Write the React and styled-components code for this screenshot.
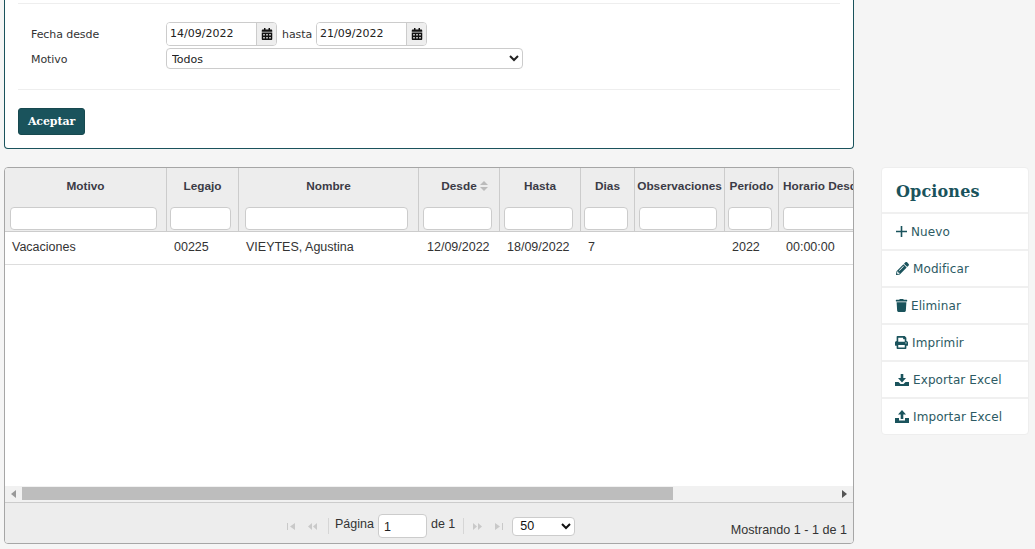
import { createGlobalStyle, styled } from "styled-components";
import { FaCalendarAlt, FaPencilAlt, FaPrint, FaTrash } from "react-icons/fa";

const teal = "#1a535c";

const GlobalStyle = createGlobalStyle`
  html, body {
    margin: 0;
    background: #f5f5f5;
    overflow: hidden;
  }
  * { box-sizing: border-box; }
`;

const Page = styled.div`
  width: 1035px;
  height: 549px;
  padding-left: 4px;
  display: grid;
  grid-template-columns: 850px 148px;
  column-gap: 27px;
  align-items: start;
  font-family: "DejaVu Sans", sans-serif;
`;

const Main = styled.div`
  display: flex;
  flex-direction: column;
  gap: 18px;
`;

const FilterPanel = styled.section`
  height: 149px;
  background: #fff;
  border: 1px solid ${teal};
  border-top: 0;
  border-radius: 0 0 4px 4px;
  padding: 3px 13px 0;
`;

const Rule = styled.div`
  height: 1px;
  background: #eee;
`;

const FilterForm = styled.div`
  height: 85px;
  padding: 18px 0 0 13px;
  display: flex;
  flex-direction: column;
  gap: 2px;
`;

const FormRow = styled.div`
  display: flex;
  align-items: center;
`;

const Label = styled.label`
  width: 135px;
  padding-top: ${(p) => p.$drop || 0}px;
  font-size: 11px;
  letter-spacing: -0.08px;
  color: #333;
`;

const DateGroup = styled.div`
  display: flex;
  width: 111px;
  height: 24px;
  border: 1px solid #ccc;
  border-radius: 4px;
  overflow: hidden;
`;

const DateValue = styled.div`
  flex: 1;
  background: #fff;
  font-size: 11px;
  line-height: 22px;
  padding-left: 3px;
  color: #222;
`;

const CalendarAddon = styled.div`
  width: 20px;
  background: #eee;
  border-left: 1px solid #ccc;
  display: flex;
  align-items: center;
  justify-content: center;
  color: #111;
  font-size: 12px;
`;

const Between = styled.span`
  width: 39px;
  padding-left: 5px;
  font-size: 11px;
  letter-spacing: -0.08px;
  color: #333;
`;

const MotivoSelect = styled.select`
  width: 357px;
  height: 21px;
  margin: 0;
  padding: 2px 0 0 1px;
  border: 1px solid #ccc;
  border-radius: 4px;
  background-color: #fff;
  font-family: "DejaVu Sans", sans-serif;
  font-size: 11px;
  color: #222;
`;

const AcceptButton = styled.button`
  display: block;
  width: 67px;
  height: 27px;
  margin-top: 18px;
  padding: 0;
  background: ${teal};
  border: 1px solid #17494f;
  border-radius: 3px;
  color: #fff;
  font-family: "DejaVu Serif", serif;
  font-size: 11px;
  font-weight: 700;
  letter-spacing: -0.1px;
`;

const Grid = styled.section`
  height: 377px;
  background: #fff;
  border: 1px solid #a6a6a6;
  border-radius: 4px;
  display: flex;
  flex-direction: column;
  overflow: hidden;
  font-family: "Liberation Sans", sans-serif;
  font-size: 12.5px;
  color: #333;
`;

const columns = "162px 72px 180px 81px 81px 54px 90px 54px 90px";

const HeaderRow = styled.div`
  display: grid;
  grid-template-columns: ${columns};
  height: 64px;
  background: #ededed;
  border-bottom: 1px solid #ccc;
  overflow: hidden;
`;

const HeaderCell = styled.div`
  border-right: 1px solid #ccc;
  display: flex;
  flex-direction: column;
  min-width: 0;
  &:last-child { border-right: 0; }
`;

const HeaderTitle = styled.div`
  height: 37px;
  padding-bottom: 1px;
  padding-left: ${(p) => (p.$clipped ? 4 : 0)}px;
  display: flex;
  align-items: center;
  justify-content: ${(p) => (p.$clipped ? "flex-start" : "center")};
  white-space: nowrap;
  font-size: 11.8px;
  font-weight: 700;
  color: #3b3b46;
`;

const SortIcon = styled.svg`
  margin: 0 -11px 0 3px;
`;

const ColumnFilter = styled.div`
  height: 23px;
  margin: 2px ${(p) => p.$right}px 0 ${(p) => p.$left}px;
  background: #fff;
  border: 1px solid #ccc;
  border-radius: 4px;
  flex-shrink: 0;
`;

const BodyRow = styled.div`
  display: grid;
  grid-template-columns: ${columns};
  height: 33px;
  padding-bottom: 2px;
  border-bottom: 1px solid #ddd;
  align-items: center;
`;

const BodyCell = styled.div`
  padding-left: ${(p) => p.$pad}px;
  white-space: nowrap;
`;

const GridBody = styled.div`
  flex: 1;
`;

const ScrollBar = styled.div`
  height: 17px;
  display: flex;
  align-items: center;
  background: #f1f1f1;
  border-bottom: 1px solid #ccc;
  padding-bottom: 1px;
`;

const ScrollArrow = styled.div`
  width: 17px;
  display: flex;
  justify-content: center;
  flex-shrink: 0;
`;

const ScrollTrack = styled.div`
  flex: 1;
  height: 13px;
`;

const ScrollThumb = styled.div`
  height: 100%;
  background: #bdbdbd;
`;

const Pager = styled.div`
  height: 40px;
  background: #ededed;
  display: flex;
  padding-right: 6px;
`;

const PagerCenter = styled.div`
  margin-left: 276px;
  padding-top: 6px;
  display: flex;
  align-items: center;
`;

const PagerText = styled.span`
  margin-bottom: 4px;
  white-space: nowrap;
`;

const PagerIcon = styled.svg`
  margin: 0 6px;
  display: block;
`;

const PagerDivider = styled.div`
  width: 1px;
  height: 16px;
  margin: 0 ${(p) => p.$right}px 0 ${(p) => p.$left}px;
  background: #d6d6d6;
`;

const PageInput = styled.div`
  width: 49px;
  height: 24px;
  margin: 0 4px;
  padding-left: 5px;
  line-height: 24px;
  background: #fff;
  border: 1px solid #ccc;
  border-radius: 4px;
  color: #222;
`;

const PageSize = styled.select`
  width: 63px;
  height: 19px;
  margin: 0 0 0 3px;
  padding: 0 0 0 3px;
  background: #fff;
  border: 1px solid #ccc;
  border-radius: 4px;
  font-family: "Liberation Sans", sans-serif;
  font-size: 12.5px;
  color: #111;
`;

const PagerInfo = styled.div`
  margin-left: auto;
  align-self: flex-end;
  padding-bottom: 6px;
  font-size: 12.6px;
  white-space: nowrap;
`;

const Sidebar = styled.aside`
  margin-top: 167px;
  background: #fff;
  border: 1px solid #eee;
  border-radius: 4px;
  color: ${teal};
`;

const SidebarTitle = styled.h3`
  height: 44px;
  margin: 0;
  padding: 14px 0 0 14px;
  font-family: "DejaVu Serif", serif;
  font-size: 16px;
  font-weight: 700;
  line-height: 19px;
  letter-spacing: 0.15px;
`;

const MenuItem = styled.div`
  height: 37px;
  border-top: 2px solid #f0f0f0;
  padding-left: ${(p) => p.$left}px;
  display: flex;
  align-items: center;
  gap: ${(p) => p.$gap}px;
  font-size: 12px;
  letter-spacing: 0.1px;
  color: #2c5a63;
  svg { flex-shrink: 0; color: ${teal}; }
`;

const fields = [
  { title: "Motivo", left: 5, right: 9, value: "Vacaciones" },
  { title: "Legajo", left: 3, right: 7, value: "00225" },
  { title: "Nombre", left: 6, right: 10, value: "VIEYTES, Agustina" },
  { title: "Desde", left: 4, right: 7, value: "12/09/2022", pad: 8, sorted: true },
  { title: "Hasta", left: 4, right: 7, value: "18/09/2022" },
  { title: "Dias", left: 3, right: 6, value: "7" },
  { title: "Observaciones", left: 4, right: 7, value: "" },
  { title: "Período", left: 3, right: 6, value: "2022" },
  { title: "Horario Desde", left: 4, right: 0, value: "00:00:00", clipped: true },
];

const PlusIcon = () => (
  <svg width="11" height="11" viewBox="0 0 11 11" fill="currentColor">
    <path d="M4.700 0h1.600v4.700H11v1.600H6.300V11H4.700V6.300H0V4.700h4.700z" />
  </svg>
);

const ExportIcon = () => (
  <svg width="14" height="12" viewBox="0 0 14 12" fill="currentColor">
    <path d="M5.700 0h2.600v4H11L7 8.500 3 4h2.700z" />
    <path d="M0 8h3.500L5.500 10h3L10.500 8H14v4H0z" />
  </svg>
);

const ImportIcon = () => (
  <svg width="14" height="13" viewBox="0 0 14 13" fill="currentColor">
    <path d="M7 0l4 4.500H8.300V9H5.700V4.500H3z" />
    <path d="M0 8h4v2.500h6V8h4v5H0z" />
  </svg>
);

const FirstIcon = ({ flip }) => (
  <PagerIcon width="8" height="7" viewBox="0 0 8 7" fill="#c9c9c9" style={flip ? { transform: "scaleX(-1)" } : undefined}>
    <path d="M0 0h1v7H0zM8 0v7L3 3.500z" />
  </PagerIcon>
);

const PrevIcon = ({ flip }) => (
  <PagerIcon width="10" height="7" viewBox="0 0 10 7" fill="#c9c9c9" style={flip ? { transform: "scaleX(-1)" } : undefined}>
    <path d="M5 0v7L1 3.500zM10 0v7L6 3.500z" />
  </PagerIcon>
);

const menu = [
  { label: "Nuevo", icon: <PlusIcon />, left: 14, gap: 4 },
  { label: "Modificar", icon: <FaPencilAlt size={13} />, left: 14, gap: 4 },
  { label: "Eliminar", icon: <FaTrash size={13} />, left: 13, gap: 3 },
  { label: "Imprimir", icon: <FaPrint size={13} />, left: 13, gap: 4 },
  { label: "Exportar Excel", icon: <ExportIcon />, left: 13, gap: 4 },
  { label: "Importar Excel", icon: <ImportIcon />, left: 13, gap: 4 },
];

const DateField = ({ value }) => (
  <DateGroup>
    <DateValue>{value}</DateValue>
    <CalendarAddon>
      <FaCalendarAlt />
    </CalendarAddon>
  </DateGroup>
);

export default function App() {
  return (
    <Page>
      <GlobalStyle />
      <Main>
        <FilterPanel>
          <Rule />
          <FilterForm>
            <FormRow>
              <Label>Fecha desde</Label>
              <DateField value="14/09/2022" />
              <Between>hasta</Between>
              <DateField value="21/09/2022" />
            </FormRow>
            <FormRow>
              <Label $drop={2}>Motivo</Label>
              <MotivoSelect defaultValue="Todos">
                <option>Todos</option>
              </MotivoSelect>
            </FormRow>
          </FilterForm>
          <Rule />
          <AcceptButton>Aceptar</AcceptButton>
        </FilterPanel>

        <Grid>
          <HeaderRow>
            {fields.map((f) => (
              <HeaderCell key={f.title}>
                <HeaderTitle $clipped={f.clipped}>
                  {f.title}
                  {f.sorted && (
                    <SortIcon width="8" height="10" viewBox="0 0 8 10" fill="#bbb">
                      <path d="M4 0l4 4H0zM0 6h8l-4 4z" />
                    </SortIcon>
                  )}
                </HeaderTitle>
                <ColumnFilter $left={f.left} $right={f.right} />
              </HeaderCell>
            ))}
          </HeaderRow>
          <BodyRow>
            {fields.map((f) => (
              <BodyCell key={f.title} $pad={f.pad || 7}>
                {f.value}
              </BodyCell>
            ))}
          </BodyRow>
          <GridBody />
          <ScrollBar>
            <ScrollArrow>
              <svg width="5" height="8" viewBox="0 0 5 8" fill="#999">
                <path d="M5 0v8L0 4z" />
              </svg>
            </ScrollArrow>
            <ScrollTrack>
              <ScrollThumb style={{ width: `${(651 / 814) * 100}%` }} />
            </ScrollTrack>
            <ScrollArrow>
              <svg width="5" height="8" viewBox="0 0 5 8" fill="#555">
                <path d="M0 0v8l5-4z" />
              </svg>
            </ScrollArrow>
          </ScrollBar>
          <Pager>
            <PagerCenter>
              <FirstIcon />
              <PrevIcon />
              <PagerDivider $left={5} $right={6} />
              <PagerText>Página</PagerText>
              <PageInput>1</PageInput>
              <PagerText>de 1</PagerText>
              <PagerDivider $left={8} $right={3} />
              <PrevIcon flip />
              <FirstIcon flip />
              <PageSize defaultValue="50">
                <option>50</option>
              </PageSize>
            </PagerCenter>
            <PagerInfo>Mostrando 1 - 1 de 1</PagerInfo>
          </Pager>
        </Grid>
      </Main>

      <Sidebar>
        <SidebarTitle>Opciones</SidebarTitle>
        {menu.map((m) => (
          <MenuItem key={m.label} $left={m.left} $gap={m.gap}>
            {m.icon}
            {m.label}
          </MenuItem>
        ))}
      </Sidebar>
    </Page>
  );
}
